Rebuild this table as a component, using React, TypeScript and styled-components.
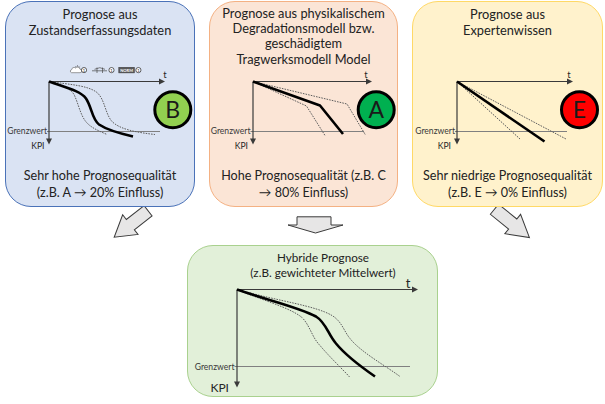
import React from "react";
import styled, { createGlobalStyle } from "styled-components";

const FONT = `Lato, "Liberation Sans", "DejaVu Sans", sans-serif`;

const GlobalStyle = createGlobalStyle`
  html, body { margin: 0; padding: 0; background: #ffffff; }
  body { font-family: ${FONT}; color: #222222; }
  #root { width: 605px; height: 404px; }
`;

const Page = styled.div`
  width: 605px;
  height: 404px;
  overflow: hidden;
  background: #ffffff;
  display: flex;
  flex-direction: column;
`;

const TopRow = styled.div`
  display: flex;
  gap: 14px;
  padding: 1px 0 0 5px;
  height: 206px;
  flex: none;
`;

const Card = styled.section<{ $w: number; $h: number; $bg: string; $bd: string }>`
  box-sizing: border-box;
  width: ${(p) => p.$w}px;
  height: ${(p) => p.$h}px;
  flex: none;
  background: ${(p) => p.$bg};
  border: 1.5px solid ${(p) => p.$bd};
  border-radius: 26px;
  display: flex;
  flex-direction: column;
`;

const Title = styled.div<{ $h: number; $pt: number; $fs: number; $lh: number; $shift?: number }>`
  box-sizing: border-box;
  flex: none;
  height: ${(p) => p.$h}px;
  padding-top: ${(p) => p.$pt}px;
  padding-left: ${(p) => p.$shift ?? 0}px;
  font-size: ${(p) => p.$fs}px;
  line-height: ${(p) => p.$lh}px;
  text-align: center;
  white-space: nowrap;
  position: relative;
  z-index: 1;
`;

const TextLine = styled.div`
  display: block;
`;

const ChartSvg = styled.svg<{ $h: number }>`
  display: block;
  flex: none;
  width: 100%;
  height: ${(p) => p.$h}px;
  overflow: visible;
  font-family: ${FONT};
`;

const Footer = styled.div`
  flex: 1;
  display: flex;
  flex-direction: column;
  justify-content: flex-end;
  align-items: center;
  padding-bottom: 5px;
  font-size: 12.6px;
  line-height: 17px;
  white-space: nowrap;
`;

const ArrowLayer = styled.svg`
  display: block;
  flex: none;
  width: 605px;
  height: 38px;
`;

const BottomRow = styled.div`
  display: flex;
  padding-left: 187px;
  flex: none;
`;

type Curve = { d: string; main?: boolean };
type ChartSpec = {
  view: [number, number, number, number];
  ox: number;
  oy: number;
  tEnd: number;
  yEnd: number;
  tx: number;
  ty: number;
  tFs: number;
  gy: number;
  gTextEnd: number;
  gTextY: number;
  gLineEnd: number;
  gFs: number;
  kpiEnd: number;
  kpiY: number;
  kpiFs: number;
  curves: Curve[];
  badge?: { cx: number; cy: number; fill: string; letter: string };
};

const PrognosisChart: React.FC<{ spec: ChartSpec; h: number; children?: React.ReactNode }> = ({
  spec,
  h,
  children,
}) => {
  const [vx, vy, vw, vh] = spec.view;
  const s = spec;
  return (
    <ChartSvg $h={h} viewBox={`${vx} ${vy} ${vw} ${vh}`}>
      {children}
      <line x1={s.gTextEnd} y1={s.gy} x2={s.gLineEnd} y2={s.gy} stroke="#808080" strokeWidth={1} />
      <text x={s.gTextEnd} y={s.gTextY} fontSize={s.gFs} textAnchor="end" fill="#3a3a3a">
        Grenzwert
      </text>
      <text x={s.kpiEnd} y={s.kpiY} fontSize={s.kpiFs} textAnchor="end" fill="#262626">
        KPI
      </text>
      <line x1={s.ox} y1={s.oy} x2={s.tEnd - 4} y2={s.oy} stroke="#3a3a3a" strokeWidth={1.2} />
      <polygon
        points={`${s.tEnd},${s.oy} ${s.tEnd - 6},${s.oy - 3} ${s.tEnd - 6},${s.oy + 3}`}
        fill="#3a3a3a"
      />
      <line x1={s.ox} y1={s.oy} x2={s.ox} y2={s.yEnd - 4} stroke="#3a3a3a" strokeWidth={1.2} />
      <polygon
        points={`${s.ox},${s.yEnd} ${s.ox - 3},${s.yEnd - 6} ${s.ox + 3},${s.yEnd - 6}`}
        fill="#3a3a3a"
      />
      {s.curves.map((c, i) =>
        c.main ? (
          <path key={i} d={c.d} fill="none" stroke="#000" strokeWidth={2.6} strokeLinejoin="round" />
        ) : (
          <path
            key={i}
            d={c.d}
            fill="none"
            stroke="#5e5e5e"
            strokeWidth={1}
            strokeDasharray="1.6 1.1"
          />
        )
      )}
      <text x={s.tx} y={s.ty} fontSize={s.tFs} fill="#262626" textAnchor="middle">
        t
      </text>
      {s.badge && (
        <g>
          <circle cx={s.badge.cx} cy={s.badge.cy} r={18} fill={s.badge.fill} stroke="#000" strokeWidth={3} />
          <text
            x={s.badge.cx}
            y={s.badge.cy + 8.3}
            fontSize={23}
            textAnchor="middle"
            fill="#1a1a1a"
          >
            {s.badge.letter}
          </text>
        </g>
      )}
    </ChartSvg>
  );
};

const CircleOne: React.FC<{ cx: number; cy: number }> = ({ cx, cy }) => (
  <g>
    <circle cx={cx} cy={cy} r={2.6} fill="#fff" stroke="#222" strokeWidth={0.7} />
    <text x={cx} y={cy + 1.5} fontSize={4.2} textAnchor="middle" fill="#222">
      1
    </text>
  </g>
);

const DataIcons: React.FC = () => (
  <g>
    {/* cloud with sun */}
    <g stroke="#5a5a5a" strokeWidth={0.6} fill="none">
      <line x1={77.5} y1={65.5} x2={77.5} y2={66.6} />
      <line x1={80.2} y1={66.6} x2={79.4} y2={67.3} />
      <line x1={75} y1={66.6} x2={75.8} y2={67.3} />
      <path d="M75.6,68.6 a2,2 0 0 1 3.9,0.6" />
      <path
        d="M71.5,73.2 h8.6 a1.7,1.7 0 0 0 0,-3.4 a2.6,2.6 0 0 0 -4.6,-1.3 a2.3,2.3 0 0 0 -3.8,1.6 a1.6,1.6 0 0 0 -0.2,3.1 z"
        fill="#ffffff"
      />
    </g>
    <CircleOne cx={84} cy={70.6} />
    {/* bridge */}
    <g stroke="#4a4a4a" strokeWidth={0.7} fill="none">
      <line x1={92} y1={71.3} x2={107} y2={71.3} />
      <line x1={97} y1={68} x2={97} y2={73.5} />
      <line x1={102.5} y1={68} x2={102.5} y2={73.5} />
      <polyline points="94.5,69.8 99.8,68.2 105,69.8" />
    </g>
    <CircleOne cx={111.5} cy={70.6} />
    <rect x={118.8} y={67.8} width={15.6} height={5.6} fill="#5a5a5a" stroke="#333" strokeWidth={0.5} />
    <text x={126.6} y={72} fontSize={4} fontWeight={700} textAnchor="middle" fill="#ffffff">
      NORM
    </text>
    <CircleOne cx={138.4} cy={70.6} />
  </g>
);

const leftSpec: ChartSpec = {
  view: [6.5, 60.5, 187, 100],
  ox: 49,
  oy: 82,
  tEnd: 165,
  yEnd: 145,
  tx: 165,
  ty: 78,
  tFs: 9.5,
  gy: 132,
  gTextEnd: 47,
  gTextY: 134.6,
  gLineEnd: 160,
  gFs: 8.6,
  kpiEnd: 44.5,
  kpiY: 149,
  kpiFs: 8.6,
  curves: [
    { d: "M49,82 C70,85 88,86 97,93 C105,100 105,114 112,122 C120,130 137,133 155,135" },
    { d: "M49,82 C60,86 70,88 74,95 C78,103 80,114 85,121 C90,128 98,131 107,135" },
    { d: "M49,82 C65,88 80,91 86,99 C92,108 92,120 99,125 C108,131 120,134 133,137", main: true },
  ],
  badge: { cx: 172.8, cy: 110.3, fill: "#92d050", letter: "B" },
};

const middleSpec: ChartSpec = {
  view: [210.5, 60.5, 186, 100],
  ox: 253,
  oy: 82,
  tEnd: 372,
  yEnd: 145,
  tx: 366,
  ty: 78.5,
  tFs: 9.5,
  gy: 132,
  gTextEnd: 250.5,
  gTextY: 134.6,
  gLineEnd: 364,
  gFs: 8.6,
  kpiEnd: 248,
  kpiY: 149,
  kpiFs: 8.6,
  curves: [
    { d: "M253,82 L306.5,106.5 L325,136" },
    { d: "M253,82 L347,104.5 L365.5,135.5" },
    { d: "M253,82 L320,106 L343,134.5", main: true },
  ],
  badge: { cx: 376.2, cy: 110.3, fill: "#00b050", letter: "A" },
};

const rightSpec: ChartSpec = {
  view: [413.5, 60.5, 188, 100],
  ox: 457,
  oy: 82,
  tEnd: 573,
  yEnd: 145,
  tx: 569,
  ty: 78,
  tFs: 9.5,
  gy: 132,
  gTextEnd: 455,
  gTextY: 134.6,
  gLineEnd: 567,
  gFs: 8.6,
  kpiEnd: 451,
  kpiY: 149,
  kpiFs: 8.6,
  curves: [
    { d: "M457,82 L520,139.5" },
    { d: "M457,82 L566,139.5" },
    { d: "M457,82 L544.5,142", main: true },
  ],
  badge: { cx: 579.5, cy: 110.3, fill: "#ff0000", letter: "E" },
};

const bottomSpec: ChartSpec = {
  view: [188.5, 280.5, 248, 115],
  ox: 237,
  oy: 290,
  tEnd: 418,
  yEnd: 388,
  tx: 408,
  ty: 288.5,
  tFs: 13,
  gy: 367,
  gTextEnd: 234.5,
  gTextY: 370,
  gLineEnd: 410,
  gFs: 8.6,
  kpiEnd: 229,
  kpiY: 392.5,
  kpiFs: 12,
  curves: [
    { d: "M237,290 C280,302 315,306 332,316 C342,322 344,332 350,339 C360,352 385,366 400,377" },
    { d: "M237,290 C260,300 290,308 302,318 C310,326 312,338 320,346 C330,358 343,370 350,378" },
    {
      d: "M237,290 C265,300 300,308 316,317 C326,323 328,335 336,344 C345,355 362,368 375,377",
      main: true,
    },
  ],
};

const BlockArrow: React.FC<{ x: number; y: number; angle: number; len: number }> = ({
  x,
  y,
  angle,
  len,
}) => {
  const shaft = len * 0.5;
  return (
    <g transform={`translate(${x},${y}) rotate(${angle})`}>
      <polygon
        points={`-6.5,-2 6.5,-2 6.5,${shaft} 12.5,${shaft} 0,${len} -12.5,${shaft} -6.5,${shaft}`}
        fill="#e7e6e6"
        stroke="#3a3a3a"
        strokeWidth={1}
        strokeLinejoin="miter"
      />
    </g>
  );
};

export default function App() {
  return (
    <>
      <GlobalStyle />
      <Page>
        <TopRow>
          <Card $w={190} $h={206} $bg="#dae3f3" $bd="#4a72b8">
            <Title $h={58} $pt={3.5} $fs={12.8} $lh={16}>
              <TextLine>Prognose aus</TextLine>
              <TextLine>Zustandserfassungsdaten</TextLine>
            </Title>
            <PrognosisChart spec={leftSpec} h={100}>
              <DataIcons />
            </PrognosisChart>
            <Footer>
              <TextLine>Sehr hohe Prognosequalität</TextLine>
              <TextLine>(z.B. A → 20% Einfluss)</TextLine>
            </Footer>
          </Card>
          <Card $w={189} $h={206} $bg="#fbe5d6" $bd="#f4b183">
            <Title $h={58} $pt={3.5} $fs={12.8} $lh={15.4}>
              <TextLine>Prognose aus physikalischem</TextLine>
              <TextLine>Degradationsmodell bzw.</TextLine>
              <TextLine>geschädigtem</TextLine>
              <TextLine>Tragwerksmodell Model</TextLine>
            </Title>
            <PrognosisChart spec={middleSpec} h={100} />
            <Footer>
              <TextLine>Hohe Prognosequalität (z.B. C</TextLine>
              <TextLine>→ 80% Einfluss)</TextLine>
            </Footer>
          </Card>
          <Card $w={191} $h={206} $bg="#fff2cc" $bd="#ffd966">
            <Title $h={58} $pt={3.5} $fs={12.8} $lh={16}>
              <TextLine>Prognose aus</TextLine>
              <TextLine>Expertenwissen</TextLine>
            </Title>
            <PrognosisChart spec={rightSpec} h={100} />
            <Footer>
              <TextLine>Sehr niedrige Prognosequalität</TextLine>
              <TextLine>(z.B. E → 0% Einfluss)</TextLine>
            </Footer>
          </Card>
        </TopRow>
        <ArrowLayer viewBox="0 207 605 38">
          <BlockArrow x={146.5} y={212} angle={52} len={41} />
          <polygon
            points="297,216.8 331,216.8 331,225 343,225 315.5,233 288,225 297,225"
            fill="#e7e6e6"
            stroke="#3a3a3a"
            strokeWidth={1}
          />
          <BlockArrow x={496} y={210.5} angle={-51} len={43} />
        </ArrowLayer>
        <BottomRow>
          <Card $w={251} $h={152} $bg="#e2f0d9" $bd="#a9d18e">
            <Title $h={34} $pt={4} $fs={11.7} $lh={15} $shift={21}>
              <TextLine>Hybride Prognose</TextLine>
              <TextLine>(z.B. gewichteter Mittelwert)</TextLine>
            </Title>
            <PrognosisChart spec={bottomSpec} h={115} />
          </Card>
        </BottomRow>
      </Page>
    </>
  );
}
